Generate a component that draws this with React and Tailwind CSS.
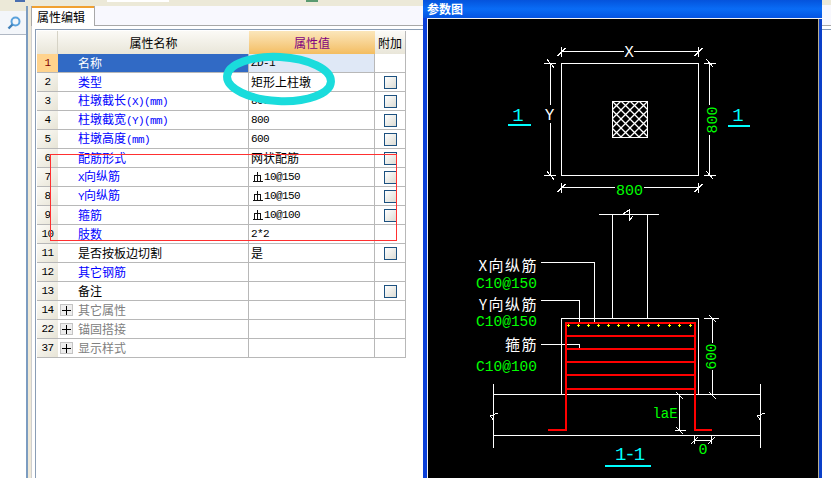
const rows = [
  { n: '1', name: '名称', value: 'ZD-1', tone: 'selected' },
  { n: '2', name: '类型', value: '矩形上柱墩', tone: 'link', check: true },
  { n: '3', name: '柱墩截长(X)(mm)', value: '800', tone: 'link', check: true },
  { n: '4', name: '柱墩截宽(Y)(mm)', value: '800', tone: 'link', check: true },
  { n: '5', name: '柱墩高度(mm)', value: '600', tone: 'link', check: true },
  { n: '6', name: '配筋形式', value: '网状配筋', tone: 'link', check: true },
  { n: '7', name: 'X向纵筋', value: '10@150', steel: true, tone: 'link', check: true },
  { n: '8', name: 'Y向纵筋', value: '10@150', steel: true, tone: 'link', check: true },
  { n: '9', name: '箍筋', value: '10@100', steel: true, tone: 'link', check: true },
  { n: '10', name: '肢数', value: '2*2', tone: 'link' },
  { n: '11', name: '是否按板边切割', value: '是', tone: 'plain', check: true },
  { n: '12', name: '其它钢筋', value: '', tone: 'link' },
  { n: '13', name: '备注', value: '', tone: 'plain', check: true },
  { n: '14', name: '其它属性', value: '', tone: 'group' },
  { n: '22', name: '锚固搭接', value: '', tone: 'group' },
  { n: '37', name: '显示样式', value: '', tone: 'group' },
];

const nameColor = {
  selected: 'bg-[#316ac5] text-white',
  link: 'text-[#0000ff]',
  plain: 'text-black',
  group: 'text-[#808080]',
};

// latin runs are 6px wide in the original, cjk 12px
const Mixed = ({ text }) => (
  <>
    {text.split(/([\x00-\x7f]+)/).filter(Boolean).map((part, i) =>
      /[\x00-\x7f]/.test(part)
        ? <span key={i} className="font-['Liberation_Mono'] text-[11px] tracking-[-0.6px]">{part}</span>
        : <span key={i}>{part}</span>
    )}
  </>
);

const SteelMark = () => (
  <svg width="12" height="12" viewBox="0 0 12 12" className="ml-[1px] shrink-0" fill="none" stroke="#111" strokeWidth="1" shapeRendering="crispEdges">
    <path d="M2.5 9.5V4.5H8.5V9.5" />
    <path d="M5.5 1V10.5M0.5 10.5H10.5" />
  </svg>
);

const Checkbox = () => (
  <div className="h-[13px] w-[13px] border border-[#1c5180] bg-linear-to-br from-white to-[#dcdcd4]" />
);

const PlusBox = () => (
  <div className="mr-[5px] flex h-[12px] w-[13px] items-center justify-center border border-[#c4c4c4] bg-[#eeeeee]">
    <svg width="9" height="9" viewBox="0 0 9 9" stroke="#000" strokeWidth="1">
      <path d="M4.5 0v9M0 4.5h9" />
    </svg>
  </div>
);

const Row = ({ row }) => {
  const selected = row.tone === 'selected';
  return (
    <div className="grid h-[19px] grid-cols-[21px_191px_126px_31px] border-b border-[#b8b8b8] text-[12px] leading-none">
      <div className={`flex items-center justify-center font-['Liberation_Mono'] text-[11px] tracking-[-0.6px] ${selected ? 'bg-[#ffd38d] text-[#800000]' : 'bg-linear-to-br from-[#fcfbf7] to-[#e7e4d6] text-black'}`}>
        {row.n}
      </div>
      <div className={`flex items-center border-r border-[#b8b8b8] ${row.tone === 'group' ? 'pl-[2px]' : 'pl-[20px]'} ${nameColor[row.tone]}`}>
        {row.tone === 'group' && <PlusBox />}
        <span><Mixed text={row.name} /></span>
      </div>
      <div className={`flex items-center border-r border-[#b8b8b8] pl-[2px] text-black ${selected ? 'bg-[#dfe8f6]' : ''}`}>
        {row.steel && <SteelMark />}
        <Mixed text={row.value} />
      </div>
      <div className="flex items-center justify-center border-r border-[#b8b8b8]">
        {row.check && <Checkbox />}
      </div>
    </div>
  );
};

const PropertyTable = () => (
  <div className="ml-[1px] mt-[1px] w-[369px] text-[12px] leading-none">
    <div className="grid h-[23px] grid-cols-[21px_191px_126px_31px] text-black">
      <div className="border-r border-[#d6d3c6] bg-linear-to-b from-[#fbfaf6] to-[#e9e6d9]" />
      <div className="flex items-center justify-center bg-linear-to-b from-[#fbfaf6] to-[#e9e6d9]">属性名称</div>
      <div className="flex items-center justify-center bg-linear-to-b from-[#fbe6ba] to-[#f3bd60] text-[#800080]">属性值</div>
      <div className="flex items-center justify-center border-r border-[#b8b8b8] bg-linear-to-b from-[#fbfaf6] to-[#e9e6d9]">附加</div>
    </div>
    {rows.map((r) => <Row key={r.n} row={r} />)}
  </div>
);

const green = '#00ff00';
const cyan = '#00ffff';
const red = '#ff0000';
const mono = "'Liberation Mono', monospace";
const cjk = "'Noto Sans CJK SC', sans-serif";

const Line = ({ d, color = '#fff', w = 1 }) => <path d={d} stroke={color} strokeWidth={w} fill="none" />;

const Label = ({ x, y, children, color = '#fff', size = 14.5, anchor = 'end', family = mono, spacing, rotate }) => (
  <text
    x={x}
    y={y}
    fill={color}
    fontSize={size}
    fontFamily={family}
    textAnchor={anchor}
    letterSpacing={spacing}
    transform={rotate ? `rotate(-90 ${x} ${y})` : undefined}
  >
    {children}
  </text>
);

const tickH = (x, y) => `M${x} ${y - 5}v10M${x - 4} ${y + 4}l8 -8`;
const tickV = (x, y) => `M${x - 6} ${y}h12M${x - 3} ${y - 4}l7 8`;

const rebarDots = [568.3, 578.3, 588.3, 598.3, 608.3, 618.3, 628.3, 638.3, 648.3, 658.3, 669.3, 679.3, 690.3];
const stirrups = [336, 349, 362, 375, 389];

const Drawing = () => (
  <svg viewBox="428 19 390 459" width="390" height="459" className="block bg-black" shapeRendering="crispEdges">
    <defs>
      <pattern id="hatch" x="612" y="101" width="9" height="9" patternUnits="userSpaceOnUse">
        <path d="M0 0L9 9M9 0L0 9" stroke="#fff" strokeWidth="1.3" shapeRendering="auto" />
      </pattern>
    </defs>

    {/* plan view */}
    <rect x="561.5" y="63.5" width="137" height="112" fill="none" stroke="#fff" />
    <rect x="612.5" y="101.5" width="35" height="36" fill="url(#hatch)" stroke="#fff" />
    <Line d="M561.5 51.5H624M634 51.5H698.5" />
    <Line d={tickH(561.5, 52) + tickH(698.5, 52)} />
    <Label x={629} y={57} anchor="middle" size={16}>X</Label>
    <Line d="M550.5 63.5V105M550.5 123V175.5" />
    <Line d={tickV(550, 63.5) + tickV(550, 175.5)} />
    <Label x={549.5} y={120} anchor="middle" size={16}>Y</Label>
    <Line d="M709.5 63.5V105M709.5 135V175.5" />
    <Line d={tickV(709.5, 63.5) + tickV(709.5, 175.5)} />
    <Label x={717} y={120} anchor="middle" size={15} color={green} rotate>800</Label>
    <Line d="M561.5 187.5H615M644 187.5H698.5" />
    <Line d={tickH(561.5, 188) + tickH(698.5, 188)} />
    <Label x={629.5} y={195} anchor="middle" size={15} color={green}>800</Label>
    <Label x={518} y={121} anchor="middle" size={19} color={cyan}>1</Label>
    <Line d="M508 125H531" color={cyan} w={2} />
    <Label x={738} y={121} anchor="middle" size={19} color={cyan}>1</Label>
    <Line d="M728 126H750" color={cyan} w={2} />

    {/* section view */}
    <Line d="M599 214.5H659M612.5 214.5V318M647.5 214.5V318" />
    <Line d="M623 214L629 210V221L633 216" />
    <Line d="M561.5 394V318.5H698.5V394" />
    <Line d="M493.5 394.5H760.5M493.5 435.5H760.5M493.5 384V448M760.5 384V448" />
    <Line d="M490 416L498 413M493.5 420L490 416M757 416L765 413M760.5 420L757 416" />

    <Line d="M540.5 262.5H594.5V324M540.5 300.5H579.5V324M540.5 344.5H579.5V349" />
    {stirrups.map((y) => <Line key={y} d={`M566 ${y}H694`} color={red} w={2} />)}
    <Line d="M548 430H566V323H694.5V430H712" color={red} w={2} />
    {rebarDots.map((x) => (
      <Line key={x} d={`M${x - 1.5} 325.5h3M${x} 324v3`} color="#ffff00" />
    ))}

    <Label x={538} y={271} size={15} spacing={1.5} family={cjk}>X向纵筋</Label>
    <Label x={537} y={288} color={green}>C10@150</Label>
    <Label x={538} y={310} size={15} spacing={1.5} family={cjk}>Y向纵筋</Label>
    <Label x={537} y={326} color={green}>C10@150</Label>
    <Label x={538} y={350} size={15} spacing={1.5} family={cjk}>箍筋</Label>
    <Label x={537} y={371} color={green}>C10@100</Label>

    <Line d="M712.5 318V343M712.5 370V394" />
    <Line d="M704 318.5H719M709 315L716 322M704 394.5H712M709 392L716 399" />
    <Label x={716} y={356.5} anchor="middle" size={14.5} color={green} rotate>600</Label>
    <Label x={665} y={418} anchor="middle" size={14} color={green}>laE</Label>
    <Line d="M679.5 394V430M675 430.5H686M676 427L683 434M676 392L683 399" />
    <Line d="M694 440.5H711.5M694.5 436V444M711.5 436V444M691 444L698 437M708 444L715 437" />
    <Label x={703} y={454} anchor="middle" size={15} color={green}>0</Label>
    <Label x={629} y={460} anchor="middle" size={19} spacing={-2} color={cyan}>1-1</Label>
    <Line d="M605 466H651" color={cyan} w={2} />
  </svg>
);

const ParamWindow = () => (
  <div className="flex h-[478px] w-[399px] flex-col bg-linear-to-r from-[#0a3fd8] via-[#1458f0] to-[#0a3fc8]">
    <div className="flex h-[18px] items-center bg-linear-to-b from-[#0553dc] via-[#0a6cf6] to-[#0553e2] pl-[4px] font-['Noto_Sans_CJK_SC',sans-serif] text-[12px] font-bold leading-none text-white">
      参数图
    </div>
    <div className="ml-[4px] flex flex-1 border-l border-t border-[#f2f2f2]">
      <Drawing />
      <div className="w-[1px] bg-[#b9ae8e]" />
    </div>
  </div>
);

const App = () => (
  <div className="flex h-[478px] w-[831px] overflow-hidden bg-white font-['Noto_Sans_CJK_SC',sans-serif]">
    <div className="flex w-[423px] flex-col">
      <div className="flex h-[6px] bg-[#ece9d8]">
        <div className="ml-[15px] h-[2px] w-[10px] bg-[#4a6fb0]" />
        <div className="ml-[82px] h-[2px] w-[62px] bg-white" />
        <div className="ml-[137px] h-[2px] w-[12px] bg-[#5a9a70]" />
      </div>
      <div className="flex flex-1">
        <div className="flex w-[26px] flex-col">
          <div className="h-[5px] bg-[#ece9d8]" />
          <div className="flex h-[24px] items-center justify-end border-b border-[#b0b8c4] bg-[#f3f6fa] pr-[5px]">
            <svg width="14" height="14" viewBox="0 0 14 14" fill="none" stroke="#5aa2dc">
              <circle cx="8.5" cy="5.5" r="4" strokeWidth="2" />
              <path d="M5.5 8.5L1.5 12.5" strokeWidth="2.4" stroke="#3f7fb8" />
            </svg>
          </div>
        </div>
        <div className="w-[2px] bg-[#7c9cc0]" />
        <div className="w-[3px] bg-[#efe9d8]" />
        <div className="flex flex-1 flex-col">
          <div className="flex h-[20px]">
            <div className="flex w-[64px] flex-col border-x border-[#a8a8a8] bg-white">
              <div className="h-[2px] bg-[#f0a030]" />
              <div className="flex flex-1 items-center pl-[5px] text-[12px] leading-none text-black">属性编辑</div>
            </div>
            <div className="flex-1 border-b border-[#a8a8a8] bg-[#f8f8fe]" />
          </div>
          <div className="flex flex-1">
            <div className="w-[1px] bg-[#cfcfcf]" />
            <div className="w-[3px] bg-white" />
            <div className="flex-1 pt-[3px]">
              <div className="flex h-full flex-col border-l border-t border-[#8a9db5]">
                <PropertyTable />
              </div>
            </div>
          </div>
        </div>
      </div>
    </div>

    <ParamWindow />

    <div className="flex w-[9px] flex-col">
      <div className="h-[5px] bg-[#ece9d8]" />
      <div className="h-[21px] border-b border-[#a8a8a8] bg-[#f8f8fe]" />
      <div className="h-[4px] border-b border-[#8a9db5]" />
    </div>

    {/* hand-drawn markup on top of the screenshot */}
    <svg className="pointer-events-none absolute left-0 top-0" width="423" height="260" fill="none">
      <ellipse cx="279" cy="79" rx="52" ry="22" stroke="#1adcdc" strokeWidth="8" transform="rotate(3 279 79)" />
      <rect x="50.5" y="154.5" width="346" height="86" stroke="#ff3030" />
    </svg>
  </div>
);

export default App;
